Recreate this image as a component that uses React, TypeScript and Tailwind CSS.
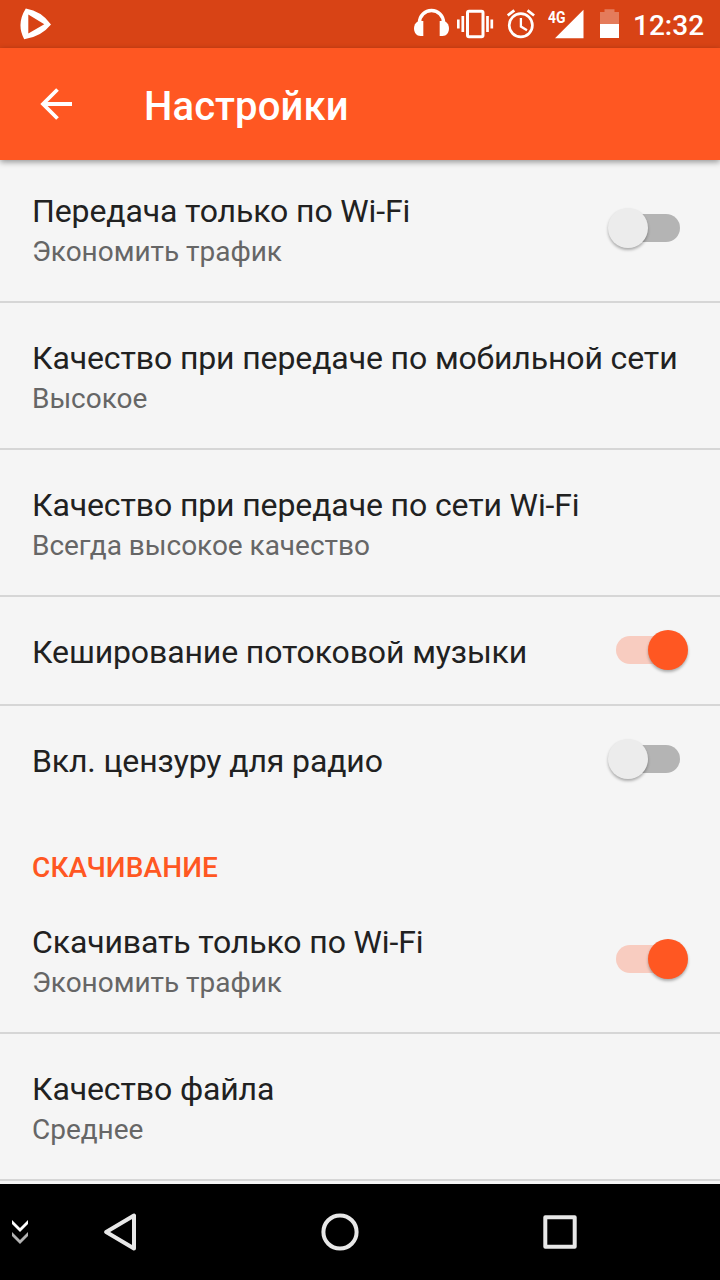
import { useState } from "react";

type Item = {
  id: string;
  title: string;
  summary?: string;
  toggle?: boolean;
};

const streamingItems: Item[] = [
  { id: "wifi-stream", title: "Передача только по Wi-Fi", summary: "Экономить трафик", toggle: true },
  { id: "mobile-quality", title: "Качество при передаче по мобильной сети", summary: "Высокое" },
  { id: "wifi-quality", title: "Качество при передаче по сети Wi-Fi", summary: "Всегда высокое качество" },
  { id: "cache", title: "Кеширование потоковой музыки", toggle: true },
  { id: "censor", title: "Вкл. цензуру для радио", toggle: true },
];

const downloadItems: Item[] = [
  { id: "wifi-download", title: "Скачивать только по Wi-Fi", summary: "Экономить трафик", toggle: true },
  { id: "file-quality", title: "Качество файла", summary: "Среднее" },
];

function StatusBar() {
  return (
    <div className="flex h-12 shrink-0 items-center justify-between bg-[#d84315] pl-5 pr-4 text-white">
      <svg width="32" height="48" viewBox="20 0 32 48" fill="none">
        <path
          d="M25.800 8.500Q41.500 11 51 24.500Q41 37 24.200 39.200Q16 24 25.800 8.500ZM28.300 14.500V33.500L44.300 24.300Z"
          fill="currentColor"
          fillRule="evenodd"
        />
      </svg>
      <div className="flex items-center">
        {/* headphones */}
        <svg width="36" height="48" viewBox="414 0 36 48" fill="none">
          <path d="M419.500 22.500A12 12 0 0 1 443.500 22.500" stroke="currentColor" strokeWidth="3.400" />
          <path d="M423.300 21H420.500C416.500 21 414 24.500 414 28.500S416.500 36 420.500 36H423.300Z" fill="currentColor" />
          <path d="M439.700 21H442.500C446.500 21 449 24.500 449 28.500S446.500 36 442.500 36H439.700Z" fill="currentColor" />
        </svg>
        {/* vibrate */}
        <svg className="ml-[7px]" width="37" height="48" viewBox="457 0 37 48" fill="none">
          <rect x="467.500" y="11.300" width="15.500" height="25.500" rx="1.500" stroke="currentColor" strokeWidth="3" />
          <path d="M462.800 16V32M487.500 16V32M458.300 19.500V28.500M491.800 19.500V28.500" stroke="currentColor" strokeWidth="2.700" />
        </svg>
        {/* alarm */}
        <svg className="ml-[13px]" width="28" height="48" viewBox="507 0 28 48" fill="none">
          <circle cx="520.800" cy="25.300" r="11.600" stroke="currentColor" strokeWidth="2.700" />
          <path d="M507.700 15.500L514.300 10.300M527.500 10.300L534.100 15.500" stroke="currentColor" strokeWidth="2.800" />
          <path d="M520.900 18V26.500L527 30.300" stroke="currentColor" strokeWidth="2.300" />
        </svg>
        {/* signal */}
        <svg className="ml-[13px]" width="36" height="48" viewBox="548 0 36 48">
          <text
            x="548"
            y="22.500"
            textLength="17.500"
            lengthAdjust="spacingAndGlyphs"
            fill="currentColor"
            className="text-[17px] font-bold"
          >
            4G
          </text>
          <path d="M555 38.300L583.500 9.800V38.300Z" fill="currentColor" />
        </svg>
        {/* battery */}
        <svg className="ml-4" width="19" height="48" viewBox="600 0 19 48">
          <path d="M600 24V12H604.500V9.300H614.500V12H619V24Z" fill="currentColor" opacity=".3" />
          <path d="M600 24H619V38H600Z" fill="currentColor" />
        </svg>
        <span className="ml-[14px] mt-1 w-[71px] whitespace-nowrap text-[28px] font-medium leading-8">12:32</span>
      </div>
    </div>
  );
}

function Toolbar() {
  return (
    <header className="relative z-10 flex h-28 shrink-0 items-center bg-[#ff5722] pl-10 text-white shadow-[0_2px_6px_rgba(0,0,0,0.4)]">
      <button aria-label="Назад">
        <svg width="32" height="32" viewBox="0 0 32 32" fill="none" stroke="currentColor" strokeWidth="3.800">
          <path d="M32 16H4M17.500 1.500L3 16L17.500 30.500" />
        </svg>
      </button>
      <h1 className="ml-[72px] mt-1.5 text-[40px] font-medium leading-[48px] tracking-[0.1px]">Настройки</h1>
    </header>
  );
}

function Switch({ on, onClick }: { on: boolean; onClick: () => void }) {
  return (
    <button
      role="switch"
      aria-checked={on}
      onClick={onClick}
      className="relative mb-px flex h-10 w-20 shrink-0 items-center px-2"
    >
      <span className={`h-7 w-full rounded-full ${on ? "bg-[#f8ccc0]" : "bg-[#b4b4b4]"}`} />
      <span
        className={`absolute top-0 size-10 rounded-full shadow-[0_2px_3px_rgba(0,0,0,0.3)] ${
          on ? "right-0 bg-[#ff5722]" : "left-0 bg-[#ececec]"
        }`}
      />
    </button>
  );
}

function Row({ item, on, onToggle }: { item: Item; on: boolean; onToggle: () => void }) {
  return (
    <li
      className={`box-content flex items-center justify-between border-b-2 border-[#d6d6d6] px-8 last:border-b-0 ${
        item.summary ? "h-[145px]" : "h-[107px]"
      }`}
    >
      <div className="whitespace-nowrap">
        <p className="mt-[3px] text-[32px] leading-[38px] tracking-[-0.12px] text-[#212121]">{item.title}</p>
        {item.summary && <p className="mt-[5px] text-[28px] leading-[33px] tracking-[-0.03px] text-[#666]">{item.summary}</p>}
      </div>
      {item.toggle && <Switch on={on} onClick={onToggle} />}
    </li>
  );
}

function NavBar() {
  return (
    <nav className="relative z-10 flex h-24 shrink-0 items-center bg-black text-[#e8e8e8]">
      <svg className="ml-3" width="16" height="26" viewBox="0 0 16 26">
        <path d="M0 1L8 9L16 1V5L8 13L0 5Z" fill="#fff" />
        <path d="M0 13L8 21L16 13V17L8 25L0 17Z" fill="#b3b3b3" />
      </svg>
      <svg
        className="ml-[76px]"
        width="32"
        height="38"
        viewBox="0 0 32 38"
        fill="none"
        stroke="currentColor"
        strokeWidth="4"
        strokeLinejoin="round"
      >
        <path d="M2.200 19L30 2.500V35.500Z" />
      </svg>
      <svg className="ml-[185px]" width="38" height="38" viewBox="0 0 38 38" fill="none" stroke="currentColor" strokeWidth="4">
        <circle cx="19" cy="19" r="16.600" />
      </svg>
      <svg
        className="ml-[184px]"
        width="34"
        height="34"
        viewBox="0 0 34 34"
        fill="none"
        stroke="currentColor"
        strokeWidth="4"
        strokeLinejoin="round"
      >
        <rect x="2.300" y="2.300" width="29.400" height="29.400" />
      </svg>
    </nav>
  );
}

export default function App() {
  const [enabled, setEnabled] = useState<Record<string, boolean>>({
    cache: true,
    "wifi-download": true,
  });

  const toggle = (id: string) => setEnabled((prev) => ({ ...prev, [id]: !prev[id] }));

  return (
    <div className="flex h-[1280px] w-[720px] flex-col overflow-hidden bg-[#f5f5f5] font-['Roboto',sans-serif]">
      <StatusBar />
      <Toolbar />
      <main className="min-h-0 flex-1 overflow-hidden">
        {/* list is scrolled slightly under the toolbar */}
        <ul className="-mt-1">
          {streamingItems.map((item) => (
            <Row key={item.id} item={item} on={!!enabled[item.id]} onToggle={() => toggle(item.id)} />
          ))}
        </ul>
        <h2 className="flex h-[74px] items-end px-8 pb-[3px] text-[28px] font-medium leading-[33px] tracking-[0.1px] text-[#ff5722]">
          СКАЧИВАНИЕ
        </h2>
        <ul className="border-b-2 border-[#d6d6d6]">
          {downloadItems.map((item) => (
            <Row key={item.id} item={item} on={!!enabled[item.id]} onToggle={() => toggle(item.id)} />
          ))}
        </ul>
      </main>
      <NavBar />
    </div>
  );
}
